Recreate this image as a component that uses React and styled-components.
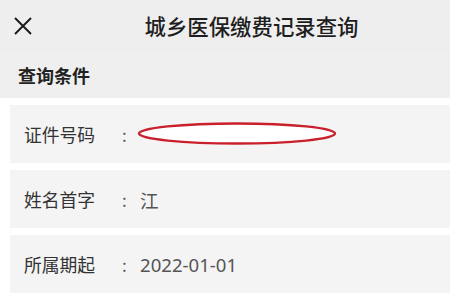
import React from 'react';
import styled, { createGlobalStyle } from 'styled-components';

const GlobalStyle = createGlobalStyle`
    html, body {
        margin: 0;
        padding: 0;
        background: #ffffff;
        font-family: "Noto Sans CJK SC", "Noto Sans", sans-serif;
    }
`;

const Page = styled.div`
    width: 450px;
    height: 300px;
    overflow: hidden;
    background: #ffffff;
`;

const TopBar = styled.div`
    height: 52px;
    display: flex;
    align-items: center;
    background: #eeeeee;
`;

const CloseButton = styled.div`
    width: 20px;
    height: 20px;
    margin-left: 13px;
    display: flex;
    align-items: center;
    justify-content: center;
`;

const Title = styled.div`
    flex: 1;
    text-align: center;
    padding-left: 34px;
    padding-right: 14px;
    font-size: 21.4px;
    font-weight: 500;
    color: #1e1e1e;
    margin-top: -1px;
`;

const SectionHead = styled.div`
    height: 46px;
    display: flex;
    align-items: center;
    padding-left: 18px;
    background: #efefef;
    font-size: 18px;
    font-weight: 700;
    color: #222;
`;

const List = styled.div`
    display: flex;
    flex-direction: column;
    gap: 7px;
    padding: 7px 0 0 10px;
`;

const Row = styled.div`
    height: 58px;
    display: flex;
    align-items: center;
    background: #f4f4f4;
    padding-left: 14px;
`;

const Label = styled.span`
    width: 98px;
    font-size: 17.8px;
    color: #333;
`;

const Colon = styled.span`
    width: 18px;
    font-size: 17px;
    color: #555;
`;

const Value = styled.span`
    font-size: 18.6px;
    color: #555;
    font-family: "Noto Sans", "Noto Sans CJK SC", sans-serif;
`;

const Scribble = styled.svg`
    display: block;
    margin-left: -4px;
`;

const App = () => {
    return (
        <Page>
            <GlobalStyle />
            <TopBar>
                <CloseButton>
                    <svg width="20" height="20" viewBox="0 0 20 20">
                        <path d="M2 2 L18 18 M18 2 L2 18" stroke="#1a1a1a" strokeWidth="1.9" fill="none" />
                    </svg>
                </CloseButton>
                <Title>城乡医保缴费记录查询</Title>
            </TopBar>
            <SectionHead>查询条件</SectionHead>
            <List>
                <Row>
                    <Label>证件号码</Label>
                    <Colon>:</Colon>
                    <Scribble width="202" height="26" viewBox="0 0 202 26">
                        <ellipse cx="101" cy="12.5" rx="98" ry="10" fill="#ffffff" stroke="#c9202c" strokeWidth="2.4" />
                    </Scribble>
                </Row>
                <Row>
                    <Label>姓名首字</Label>
                    <Colon>:</Colon>
                    <Value>江</Value>
                </Row>
                <Row>
                    <Label>所属期起</Label>
                    <Colon>:</Colon>
                    <Value>2022-01-01</Value>
                </Row>
            </List>
        </Page>
    );
};

export default App;
